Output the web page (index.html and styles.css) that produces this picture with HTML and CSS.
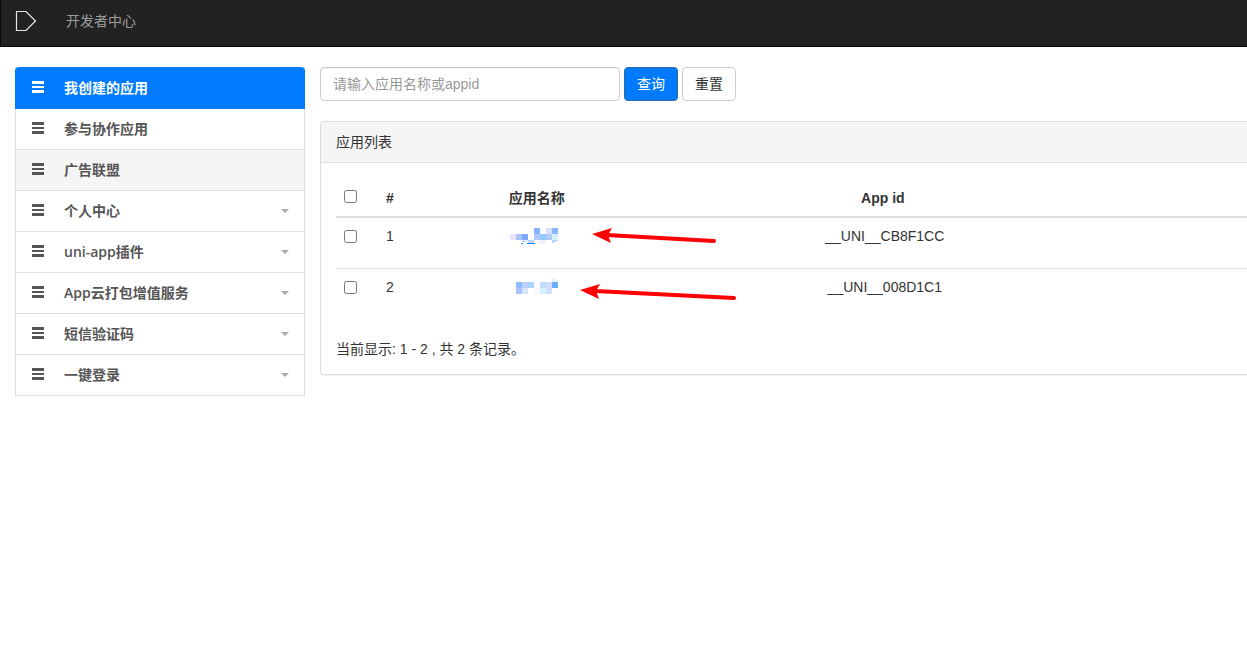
FILE: index.html
```html
<!DOCTYPE html>
<html lang="zh-CN">
<head>
<meta charset="utf-8">
<meta name="viewport" content="width=device-width, initial-scale=1">
<title>开发者中心</title>
<link rel="stylesheet" href="styles.css">
</head>
<body>
<svg class="defs" aria-hidden="true">
  <symbol id="bars" viewBox="0 0 12 12"><path d="M0 0h12v3H0zM0 5h12v2H0zM0 9h12v3H0z" fill="currentColor"/></symbol>
</svg>
<header class="navbar">
  <a class="brand" href="#" aria-label="DCloud">
    <svg width="22" height="22" viewBox="0 0 22 22"><path d="M1.500 1.500H11L20.500 11 11 20.500H1.500z" fill="none" stroke="#e6e6e6" stroke-width="1.200"/></svg>
  </a>
  <a class="nav-title" href="#">开发者中心</a>
</header>
<div class="page">
  <nav class="menu">
    <a class="menu-item active" href="#"><svg class="bars"><use href="#bars"/></svg><span>我创建的应用</span></a>
    <a class="menu-item" href="#"><svg class="bars"><use href="#bars"/></svg><span>参与协作应用</span></a>
    <a class="menu-item hover" href="#"><svg class="bars"><use href="#bars"/></svg><span>广告联盟</span></a>
    <a class="menu-item" href="#"><svg class="bars"><use href="#bars"/></svg><span>个人中心</span><i class="caret"></i></a>
    <a class="menu-item" href="#"><svg class="bars"><use href="#bars"/></svg><span>uni-app插件</span><i class="caret"></i></a>
    <a class="menu-item" href="#"><svg class="bars"><use href="#bars"/></svg><span>App云打包增值服务</span><i class="caret"></i></a>
    <a class="menu-item" href="#"><svg class="bars"><use href="#bars"/></svg><span>短信验证码</span><i class="caret"></i></a>
    <a class="menu-item" href="#"><svg class="bars"><use href="#bars"/></svg><span>一键登录</span><i class="caret"></i></a>
  </nav>
  <main class="content">
    <form class="search">
      <input class="field" type="text" placeholder="请输入应用名称或appid" aria-label="请输入应用名称或appid">
      <button class="btn primary" type="button">查询</button>
      <button class="btn" type="button">重置</button>
    </form>
    <section class="panel">
      <h1 class="panel-head">应用列表</h1>
      <div class="panel-body">
        <table class="apps">
          <colgroup><col class="c-check"><col class="c-num"><col class="c-name"><col class="c-id"><col></colgroup>
          <thead>
            <tr><th><input type="checkbox" aria-label="全选"></th><th class="num">#</th><th>应用名称</th><th>App id</th><th></th></tr>
          </thead>
          <tbody>
            <tr>
              <td><input type="checkbox" aria-label="1"></td>
              <td class="num">1</td>
              <td class="name">
                <svg class="mosaic" width="54" height="18" viewBox="0 0 54 18" shape-rendering="crispEdges">
                  <path fill="#e6e3ff" d="M0 8h6v6H0z"/><path fill="#a9c3ff" d="M6 8h6v6H6z"/><path fill="#80a7ff" d="M12 8h6v6h-6z"/>
                  <path fill="#83b6ff" d="M24 2h6v6h-6z"/><path fill="#dadfff" d="M36 2h6v6h-6z"/><path fill="#87b8ff" d="M42 2h6v6h-6z"/>
                  <path fill="#b4c7ff" d="M24 8h6v6h-6z"/><path fill="#90ccff" d="M30 8h6v6h-6z"/><path fill="#afcbff" d="M36 8h6v6h-6z"/><path fill="#d9f0ff" d="M42 8h6v6h-6z"/>
                  <path fill="#e2edff" d="M12 14h6v2h-6z"/><path fill="#b9d4ff" d="M18 14h6v3h-6z"/><path fill="#f1f0ff" d="M30 14h6v4h-6z"/><path fill="#b7d4ff" d="M42 14h6v1h-2v1h-2v1h-2z"/>
                  <path fill="#1689ff" d="M13 15h1v1h-1zM11 17h2v1h-2zM17 17h8v1h-8z"/>
                </svg>
                <svg class="arrow" width="126" height="18" viewBox="0 0 126 18"><path d="M15 9L122 15" stroke="#f00" stroke-width="4" stroke-linecap="round"/><path d="M0 8L20 2 16 9 19 17z" fill="#f00"/></svg>
              </td>
              <td class="id">__UNI__CB8F1CC</td><td></td>
            </tr>
            <tr>
              <td><input type="checkbox" aria-label="2"></td>
              <td class="num">2</td>
              <td class="name">
                <svg class="mosaic" width="54" height="18" viewBox="0 0 54 18" shape-rendering="crispEdges">
                  <path fill="#8fbaff" d="M6 5h6v6H6z"/><path fill="#bdd0ff" d="M12 5h6v6h-6z"/><path fill="#abd2ff" d="M18 5h6v6h-6z"/>
                  <path fill="#c0dcff" d="M30 5h6v6h-6z"/><path fill="#cfdfff" d="M36 5h6v6h-6z"/><path fill="#6aadff" d="M42 5h6v6h-6z"/>
                  <path fill="#adc3ff" d="M6 11h6v6H6z"/><path fill="#d5e4ff" d="M12 11h6v6h-6z"/><path fill="#fcf7ff" d="M24 11h6v6h-6z"/><path fill="#d4f2ff" d="M30 11h6v6h-6z"/><path fill="#cfdeff" d="M36 11h6v6h-6z"/>
                  <path fill="#e0f3ff" d="M42 1h2v1h2v1h2v2h-6z"/>
                </svg>
                <svg class="arrow second" width="158" height="18" viewBox="0 0 158 18"><path d="M15 9L154 16" stroke="#f00" stroke-width="4" stroke-linecap="round"/><path d="M0 8L20 2 16 9 19 17z" fill="#f00"/></svg>
              </td>
              <td class="id">__UNI__008D1C1</td><td></td>
            </tr>
          </tbody>
        </table>
        <p class="summary">当前显示: 1 - 2 , 共 2 条记录。</p>
      </div>
    </section>
  </main>
</div>
</body>
</html>
```
FILE: styles.css
```css
* { box-sizing: border-box; }
body {
  margin: 0;
  background: #fff;
  color: #333;
  font: 14px/20px "Liberation Sans", Arial, "Noto Sans CJK SC", sans-serif;
}
a { text-decoration: none; }
.defs { position: absolute; width: 0; height: 0; }

.navbar {
  display: flex;
  align-items: flex-start;
  gap: 29px;
  height: 47px;
  padding: 10px 14px;
  background: #222;
  border-bottom: 1px solid #080808;
  border-left: 1px solid #080808;
}
.brand { display: flex; }
.nav-title { padding-top: 1px; color: #9d9d9d; }

.page {
  display: flex;
  align-items: flex-start;
  gap: 15px;
  padding: 20px 0 0 15px;
}

.menu {
  flex: 0 0 290px;
  border: 1px solid #ddd;
  border-top: 0;
  border-radius: 4px 4px 0 0;
}
.menu-item {
  display: flex;
  align-items: center;
  height: 41px;
  padding: 0 16px;
  border-top: 1px solid #ddd;
  color: #555;
  font-family: "Open Sans", "Noto Sans CJK SC", sans-serif;
  font-weight: 600;
}
.menu-item.hover { background: #f5f5f5; }
.menu-item.active {
  height: 42px;
  margin: 0 -1px;
  padding: 0 17px;
  border: 0;
  border-radius: 4px 4px 0 0;
  background: #007aff;
  color: #fff;
}
.menu-item.active + .menu-item { border-top: 0; height: 40px; }
.bars { width: 12px; height: 12px; margin: 0 20px 2px 0; }
.caret {
  margin-left: auto;
  margin-right: -1px;
  border: 4px solid transparent;
  border-top-color: #aaa;
  border-bottom: 0;
}

.content { flex: 1; min-width: 0; }
.search { display: flex; gap: 4px; margin-bottom: 20px; }
.field {
  width: 300px;
  height: 34px;
  padding: 6px 12px;
  border: 1px solid #ccc;
  border-radius: 4px;
  box-shadow: inset 0 1px 1px rgba(0, 0, 0, .075);
  color: #555;
  font: inherit;
}
.field::placeholder { color: #999; }
.btn {
  height: 34px;
  padding: 6px 12px;
  border: 1px solid #ccc;
  border-radius: 4px;
  background: #fff;
  color: #333;
  font: inherit;
}
.btn.primary { border-color: #2e6da4; background: #007aff; color: #fff; }

.panel {
  border: 1px solid #ddd;
  border-right: 0;
  border-radius: 4px 0 0 4px;
  box-shadow: 0 1px 1px rgba(0, 0, 0, .05);
}
.panel-head {
  margin: 0;
  padding: 10px 15px;
  border-bottom: 1px solid #ddd;
  border-radius: 4px 0 0 0;
  background: #f5f5f5;
  font-size: 14px;
  font-weight: 400;
}
.panel-body { padding: 17px 0 15px 15px; }
.apps {
  width: 100%;
  table-layout: fixed;
  border-collapse: separate;
  border-spacing: 0;
}
.c-check { width: 42px; }
.c-num { width: 22px; }
.c-name { width: 30%; }
.c-id { width: 46%; }
.apps th, .apps td { padding: 8px; text-align: center; vertical-align: top; }
.apps th { border-bottom: 2px solid #ddd; }
.apps td { height: 50px; }
.apps tr + tr td { height: 51px; border-top: 1px solid #ddd; }
.apps .num { padding-right: 0; text-align: left; }
.apps .id { padding-left: 12px; }
.apps th:first-child, .apps td:first-child { text-align: left; }
.apps input { display: block; width: 13px; height: 13px; margin: 2px 0 0; }
.apps td input { margin-top: 4px; }
.mosaic { display: block; margin: 0 auto; }
.name { position: relative; }
.arrow { position: absolute; top: 8px; left: calc(50% + 55px); }
.arrow.second { top: 13px; left: calc(50% + 43px); }
.summary { margin: 20px 0 0; }
```
